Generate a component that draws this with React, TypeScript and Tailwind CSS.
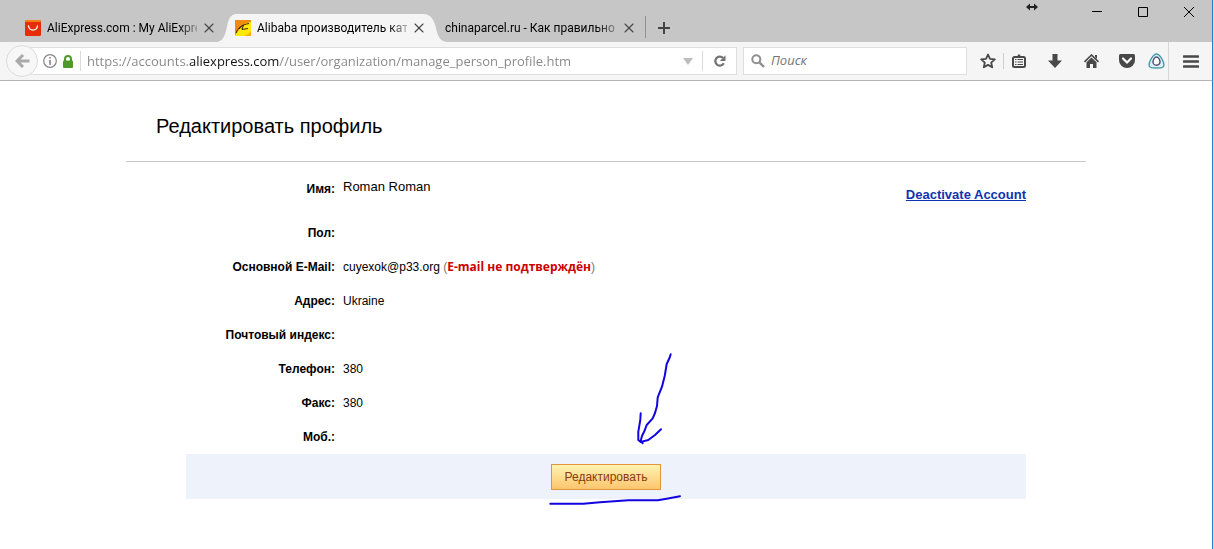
import { ReactNode } from "react";
import { X } from "lucide-react";

type Tab = {
  title: string;
  icon?: ReactNode;
  active?: boolean;
};

const TABS: Tab[] = [
  { title: "AliExpress.com : My AliExpre", icon: <AliExpressIcon /> },
  { title: "Alibaba производитель ката", icon: <AlibabaIcon />, active: true },
  { title: "chinaparcel.ru - Как правильно" },
];

const FIELDS: { label: string; value?: ReactNode }[] = [
  { label: "Пол:" },
  {
    label: "Основной E-Mail:",
    value: (
      <>
        cuyexok@p33.org <span className="text-[#777]">(</span>
        <strong className="font-['Open_Sans',sans-serif] text-[12px] font-bold text-[#cc0000]">
          E-mail не подтверждён
        </strong>
        <span className="text-[#777]">)</span>
      </>
    ),
  },
  { label: "Адрес:", value: "Ukraine" },
  { label: "Почтовый индекс:" },
  { label: "Телефон:", value: "380" },
  { label: "Факс:", value: "380" },
  { label: "Моб.:" },
];

export default function App() {
  return (
    <div className="flex min-h-screen bg-[#c3dcf2] font-['Liberation_Sans',Arial,sans-serif] text-black">
      <div className="min-w-0 flex-1 bg-white">
        <TabStrip />
        <Toolbar />
        <Profile />
      </div>
      <div className="mr-px w-px bg-[#2a7fc4]" />
    </div>
  );
}

function TabStrip() {
  return (
    <div className="flex h-[42px] items-end bg-[#c6c6c6] pl-[15px] font-['Roboto',sans-serif]">
      {TABS.map((tab) => (
        <div key={tab.title} className="relative isolate flex h-7 w-[210px] items-center gap-1.5 px-2.5">
          {tab.active && (
            <svg className="absolute -left-2 top-0 -z-10" width="230" height="28" viewBox="0 0 230 28" aria-hidden>
              <path
                d="M0 28C5 27 7 24 9 17C11 7 12 0 20 0H206C214 0 217 6 219 14C221 23 223 27 230 28Z"
                fill="#f5f5f5"
              />
            </svg>
          )}
          {tab.icon}
          <span className="min-w-0 flex-1 whitespace-nowrap text-[12px] leading-4 [mask-image:linear-gradient(to_right,#000_88%,#0004)]">
            {tab.title}
          </span>
          <button aria-label="Закрыть вкладку" className="text-[#444]">
            <CloseIcon />
          </button>
        </div>
      ))}
      <div className="mb-1 h-[22px] w-px bg-[#8f8f8f]" />
      <button aria-label="Новая вкладка" className="flex h-7 w-9 items-center justify-center">
        <svg width="12" height="12" viewBox="0 0 12 12" aria-hidden>
          <path d="M6 0V12M0 6H12" stroke="#444" strokeWidth="2" />
        </svg>
      </button>
      <div className="ml-auto flex h-full items-start">
        <svg className="mr-9 mt-[3px]" width="12" height="8" viewBox="0 0 12 8" aria-hidden>
          <path d="M0 4L4 .5V3H8V.5L12 4L8 7.500V5H4V7.500Z" fill="#222" />
        </svg>
        <button aria-label="Свернуть" className="flex h-6 w-[46px] items-center justify-center">
          <svg width="10" height="10" viewBox="0 0 10 10" aria-hidden>
            <path d="M0 4.500H10" stroke="#000" />
          </svg>
        </button>
        <button aria-label="Развернуть" className="flex h-6 w-[46px] items-center justify-center">
          <svg width="10" height="10" viewBox="0 0 10 10" aria-hidden>
            <path d="M.5 .5H9.500V9.500H.5Z" fill="none" stroke="#000" />
          </svg>
        </button>
        <button aria-label="Закрыть" className="flex h-6 w-[46px] items-center justify-center">
          <svg width="10" height="10" viewBox="0 0 10 10" aria-hidden>
            <path d="M0 0L10 10M10 0L0 10" stroke="#000" />
          </svg>
        </button>
      </div>
    </div>
  );
}

function Toolbar() {
  return (
    <div className="flex h-[39px] items-center border-b border-[#b5b5b5] bg-[#f5f5f5] pl-[6px] font-['Open_Sans',sans-serif]">
      <button
        aria-label="Назад"
        className="z-10 flex size-8 shrink-0 items-center justify-center rounded-full border border-[#dcdcdc] bg-[#f7f7f7]"
      >
        <svg width="15" height="14" viewBox="0 0 15 14" aria-hidden>
          <path d="M8 1L2 7L8 13M2.500 7H14.500" fill="none" stroke="#a9a9a9" strokeWidth="3" />
        </svg>
      </button>
      <div className="-ml-2 flex h-7 min-w-0 flex-1 items-center border border-[#dedede] bg-white pl-3">
        <InfoIcon />
        <LockIcon />
        <div className="ml-[7px] h-5 w-px bg-[#dadada]" />
        <input
          aria-label="Адрес страницы"
          defaultValue="https://accounts.aliexpress.com//user/organization/manage_person_profile.htm"
          className="ml-1.5 h-6 min-w-0 flex-1 bg-[linear-gradient(to_right,#858585_102px,#111_102px,#111_192px,#858585_192px)] bg-clip-text text-[13px] text-transparent caret-black outline-none"
        />
        <button aria-label="Показать историю" className="flex h-6 w-7 items-center justify-center">
          <svg width="10" height="7" viewBox="0 0 10 7" aria-hidden>
            <path d="M0 0H10L5 7Z" fill="#bdbdbd" />
          </svg>
        </button>
        <div className="h-5 w-px bg-[#dadada]" />
        <button aria-label="Обновить" className="flex h-6 w-[33px] items-center justify-center">
          <svg width="12" height="12" viewBox="0 0 12 12" aria-hidden>
            <path d="M9.800 8.200A4.500 4.500 0 1 1 9 2.900" fill="none" stroke="#737373" strokeWidth="2.200" />
            <path d="M11.500 .3V6H5.800Z" fill="#737373" />
          </svg>
        </button>
      </div>
      <label className="ml-1.5 flex h-7 w-[224px] shrink-0 items-center border border-[#dedede] bg-white pl-[7px]">
        <svg width="14" height="14" viewBox="0 0 14 14" aria-hidden>
          <circle cx="5.300" cy="5.300" r="4" fill="none" stroke="#8f8f8f" strokeWidth="2" />
          <path d="M8.300 8.300L13 13" stroke="#8f8f8f" strokeWidth="2.400" />
        </svg>
        <input
          aria-label="Поиск"
          placeholder="Поиск"
          className="ml-1.5 min-w-0 flex-1 text-[13px] italic outline-none placeholder:text-[#757575]"
        />
      </label>
      <div className="flex shrink-0 items-center text-[#484848]">
        <button aria-label="Добавить в закладки" className="ml-3 flex h-6 w-[18px] items-center justify-center">
          <svg width="16" height="16" viewBox="0 0 16 16" aria-hidden>
            <path
              d="M8 1.500L10 5.900L14.800 6.400L11.200 9.600L12.200 14.300L8 11.900L3.800 14.300L4.800 9.600L1.200 6.400L6 5.900Z"
              fill="none"
              stroke="currentColor"
              strokeWidth="1.800"
              strokeLinejoin="round"
            />
          </svg>
        </button>
        <div className="ml-1.5 h-4 w-px bg-[#cfcfcf]" />
        <button aria-label="Закладки" className="flex h-6 w-[30px] items-center justify-center">
          <svg width="14" height="14" viewBox="0 0 14 14" aria-hidden>
            <path
              d="M1 4.500A1.500 1.500 0 0 1 2.500 3H11.500A1.500 1.500 0 0 1 13 4.500V11.500A1.500 1.500 0 0 1 11.500 13H2.500A1.500 1.500 0 0 1 1 11.500Z"
              fill="#f5f5f5"
              stroke="currentColor"
              strokeWidth="2"
            />
            <path d="M4 3.500L7 0L10 3.500Z" fill="currentColor" />
            <path d="M3 5.500H4.500M5.500 5.500H11M3 8H4.500M5.500 8H11M3 10.500H4.500M5.500 10.500H11" stroke="currentColor" strokeWidth="1.200" />
          </svg>
        </button>
        <button aria-label="Загрузки" className="ml-[3px] flex h-6 w-9 items-center justify-center">
          <svg width="14" height="14" viewBox="0 0 14 14" aria-hidden>
            <path d="M4.500 0H9.500V6.500H14L7 14L0 6.500H4.500Z" fill="currentColor" />
          </svg>
        </button>
        <button aria-label="Домашняя страница" className="flex h-6 w-9 items-center justify-center">
          <svg width="15" height="14" viewBox="0 0 15 14" aria-hidden>
            <path d="M.5 8L7.500 1L14.500 8" fill="none" stroke="currentColor" strokeWidth="1.600" />
            <path d="M2.500 8.300L7.500 3.500L12.500 8.300V14H9V10H6V14H2.500ZM11 1H13V5L11 3Z" fill="currentColor" />
          </svg>
        </button>
        <button aria-label="Pocket" className="flex h-6 w-9 items-center justify-center">
          <svg width="16" height="14" viewBox="0 0 16 14" aria-hidden>
            <path d="M1.500 0H14.500Q16 0 16 1.500V6A8 8 0 0 1 0 6V1.500Q0 0 1.500 0Z" fill="currentColor" />
            <path d="M4 4.500L8 8.500L12 4.500" fill="none" stroke="#fff" strokeWidth="2.200" strokeLinecap="round" />
          </svg>
        </button>
        <button aria-label="Расширение" className="flex h-6 w-[23px] items-center justify-center">
          <svg width="17" height="16" viewBox="0 0 17 16" aria-hidden>
            <path d="M8.500 1C12 1 16 9 16 12C16 15 13 15 8.500 15S1 15 1 12C1 9 5 1 8.500 1Z" fill="#dff0f3" stroke="#4a9bab" strokeWidth="1.400" />
            <path d="M8.500 4C10.500 4 12 7 12 9A3.500 3.300 0 0 1 5 9C5 7 6.500 4 8.500 4Z" fill="#fff" stroke="#4b4a72" strokeWidth="1.400" />
          </svg>
        </button>
        <div className="h-[38px] w-px bg-[#d6d6d6]" />
        <button aria-label="Открыть меню" className="flex h-6 w-[43px] items-center justify-center">
          <svg width="16" height="13" viewBox="0 0 16 13" aria-hidden>
            <path d="M1 1.500H15M1 6.500H15M1 11.500H15" stroke="currentColor" strokeWidth="2.600" strokeLinecap="round" />
          </svg>
        </button>
      </div>
    </div>
  );
}

function Profile() {
  return (
    <main className="mx-auto max-w-[960px] pt-8">
      <h1 className="border-b border-[#c8c8c8] px-[30px] pb-[22px] text-[20px] leading-[26px]">
        Редактировать профиль
      </h1>
      <div className="mx-[60px]">
        <div className="flex items-start justify-between pt-[15px] text-[13px] leading-5">
          <dl className="flex gap-2">
            <dt className="w-[149px] pt-0.5 text-right text-[12px] font-bold">Имя:</dt>
            <dd>Roman Roman</dd>
          </dl>
          <a href="#deactivate" className="pt-2 font-bold text-[#1033b0] underline">
            Deactivate Account
          </a>
        </div>
        <dl className="mt-[11px] text-[12px]">
          {FIELDS.map((field) => (
            <div key={field.label} className="flex h-[34px] items-center gap-2">
              <dt className="w-[149px] text-right font-bold">{field.label}</dt>
              <dd>{field.value}</dd>
            </div>
          ))}
        </dl>
        <div className="flex h-[45px] items-center justify-center bg-[#eef3fb]">
          <div className="relative">
            <button className="h-[26px] border border-[#e0963c] bg-linear-to-b from-[#fff3b0] to-[#fcc56e] px-[13px] text-[12px] text-[#8a3a10]">
              Редактировать
            </button>
            <PenMarks />
          </div>
        </div>
      </div>
    </main>
  );
}

function PenMarks() {
  return (
    <svg
      className="pointer-events-none absolute -left-1.5 -top-[114px]"
      width="140"
      height="160"
      viewBox="0 0 140 160"
      fill="none"
      stroke="#1204e0"
      strokeWidth="2"
      strokeLinecap="round"
      strokeLinejoin="round"
      aria-hidden
    >
      <path d="M125.700 4.300L124.500 8L121.700 14L119.700 26L117 36.700L112.700 47.300L112 56L110 63L107.700 68.300L101.700 75L99.300 81.300L97 86L95.700 90.700L97.700 93.300" />
      <path d="M95.700 63.300L95.300 70L93.300 81.700L93.300 90L95.700 92L103.300 90L110 85L116 79.300" />
      <path d="M5.300 153.700H38.300L55 152.300L83.300 150.300H112.700L121.700 148.700L135 146.300" />
    </svg>
  );
}

function CloseIcon() {
  return <X size={16} strokeWidth={1.6} className="-mx-0.5" aria-hidden />;
}

function AliExpressIcon() {
  return (
    <svg className="shrink-0" width="16" height="16" viewBox="0 0 16 16" aria-hidden>
      <rect width="16" height="16" rx="1.500" fill="#e62e04" />
      <path d="M1.500 0H14.500Q16 0 16 1.500V2H0V1.500Q0 0 1.500 0Z" fill="#f0801a" />
      <path d="M3.500 6C4.500 11.500 11.500 11.500 12.500 6" fill="none" stroke="#fff" strokeWidth="1.300" strokeLinecap="round" />
    </svg>
  );
}

function AlibabaIcon() {
  return (
    <svg className="shrink-0" width="16" height="16" viewBox="0 0 16 16" aria-hidden>
      <rect width="16" height="16" fill="#ffe80a" />
      <path d="M0 0H16V2C10 3 7 5 5 8C3 11 2 13 0 15Z" fill="#f08a10" />
      <path d="M16 11V16H9C12 15 14 14 16 11Z" fill="#f7b010" />
      <path d="M1 13C3 8 6 5 14 3.500M4 9L8.500 5L7 9.500L13 8.500" fill="none" stroke="#3a2500" />
    </svg>
  );
}

function InfoIcon() {
  return (
    <svg className="shrink-0" width="14" height="14" viewBox="0 0 14 14" aria-hidden>
      <circle cx="7" cy="7" r="6.300" fill="none" stroke="#858585" strokeWidth="1.200" />
      <path d="M7 3V4.600M7 6V11" stroke="#858585" strokeWidth="1.600" />
    </svg>
  );
}

function LockIcon() {
  return (
    <svg className="ml-[6px] shrink-0" width="10" height="13" viewBox="0 0 10 13" aria-hidden>
      <path d="M2 6V4A3 3 0 0 1 8 4V6" fill="none" stroke="#4d9a2b" strokeWidth="2" />
      <rect y="5.500" width="10" height="7.500" rx="1" fill="#4d9a2b" />
    </svg>
  );
}
